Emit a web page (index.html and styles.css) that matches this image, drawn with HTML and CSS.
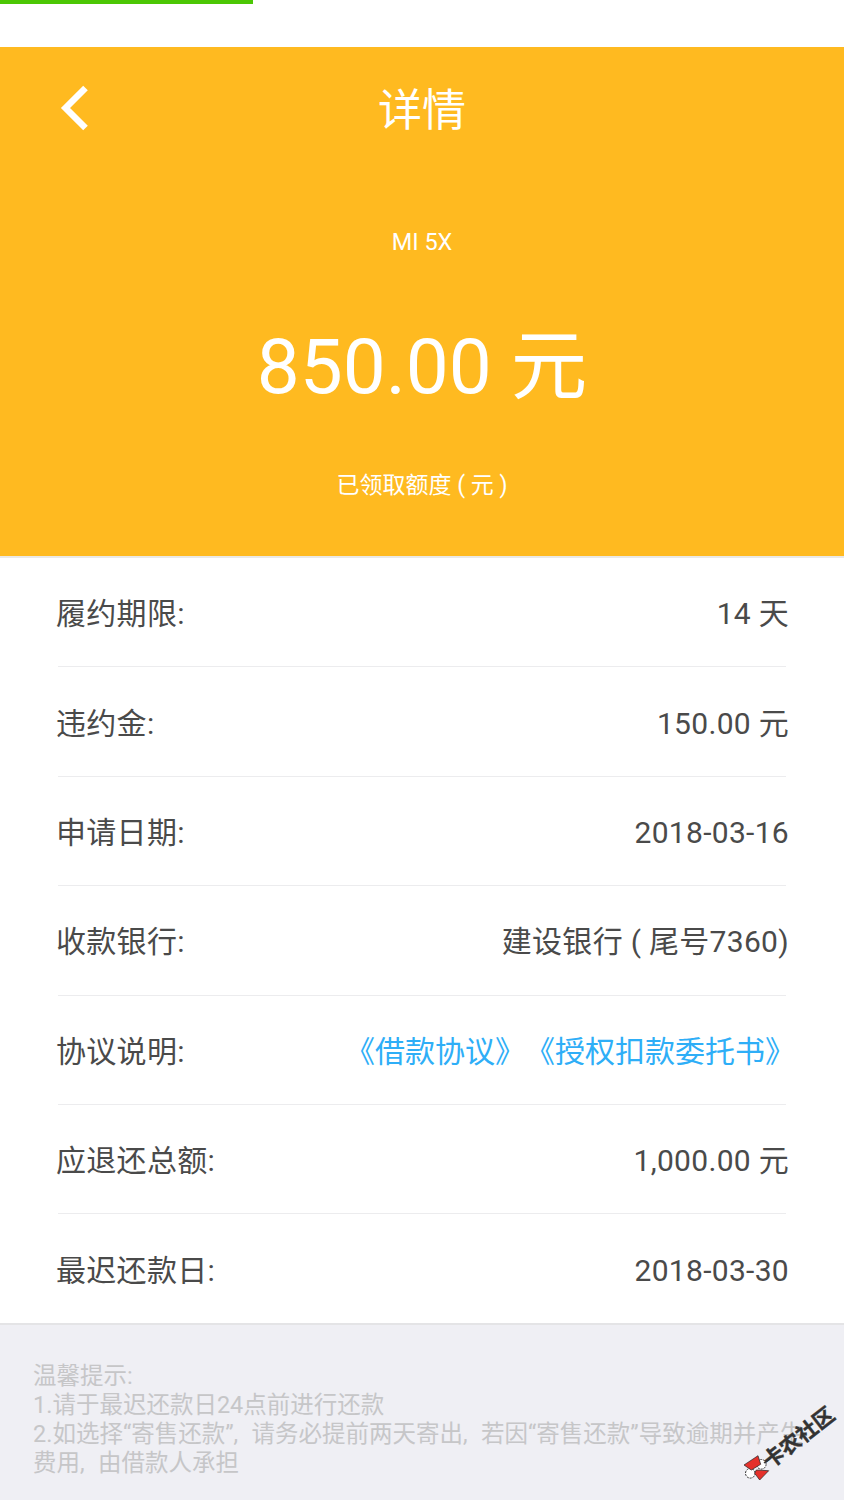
FILE: index.html
```html
<!DOCTYPE html>
<html lang="zh-CN">
<head>
    <meta charset="UTF-8">
    <meta name="viewport" content="width=device-width, initial-scale=1.0">
    <title>详情</title>
    <link rel="stylesheet" href="styles.css">
</head>
<body>
    <div class="progress"><div class="progress-bar"></div></div>

    <header class="hero">
        <div class="nav">
            <svg class="back" width="32" height="50" viewBox="0 0 32 50">
                <path d="M27.5 4 L7.5 24 L27.5 44" fill="none" stroke="#fff" stroke-width="6.5"/>
            </svg>
            <h1 class="title">详情</h1>
        </div>
        <p class="device">MI 5X</p>
        <p class="amount">850.00 元</p>
        <p class="amount-label">已领取额度 ( 元 )</p>
    </header>

    <section class="details">
        <div class="row"><span>履约期限:</span><span>14 天</span></div>
        <div class="row"><span>违约金:</span><span>150.00 元</span></div>
        <div class="row"><span>申请日期:</span><span>2018-03-16</span></div>
        <div class="row"><span>收款银行:</span><span>建设银行 ( 尾号7360)</span></div>
        <div class="row"><span>协议说明:</span><span class="links"><a>《借款协议》</a><a>《授权扣款委托书》</a></span></div>
        <div class="row"><span>应退还总额:</span><span>1,000.00 元</span></div>
        <div class="row"><span>最迟还款日:</span><span>2018-03-30</span></div>
    </section>

    <footer class="tips">
        <p>温馨提示:</p>
        <p>1.请于最迟还款日24点前进行还款</p>
        <p>2.如选择“寄售还款”, 请务必提前两天寄出, 若因“寄售还款”导致逾期并产生费用, 由借款人承担</p>
    </footer>

    <svg class="wm-logo" width="30" height="28" viewBox="0 0 30 28">
        <circle cx="18.3" cy="9.3" r="4.8" fill="#fff" stroke="#333" stroke-dasharray="2 1"/>
        <circle cx="7.3" cy="18.3" r="4.8" fill="#fff" stroke="#333" stroke-dasharray="2 1"/>
        <path d="M1 10 L15 0.7 L17.7 9.3 L8.3 15 Z M13.3 15 L25.7 15.7 L16.7 25 L11.7 18.3 Z" fill="#e5312b" stroke="#222" stroke-width="0.7"/>
        <path d="M21 8 L27 4" stroke="#333" stroke-width="1.5"/>
    </svg>
    <div class="wm-text">卡农社区</div>
</body>
</html>
```

FILE: styles.css
```css
* {
    box-sizing: border-box;
}
body {
    margin: 0;
    height: 1500px;
    overflow: hidden;
    position: relative;
    background-color: #efeff4;
    font-family: Roboto, "Noto Sans CJK SC", sans-serif;
}
p, h1 {
    margin: 0;
    font-weight: 400;
}
.progress {
    height: 47px;
    background-color: #fff;
}
.progress-bar {
    width: 253px;
    height: 4px;
    background-color: #4cc705;
}
.hero {
    height: 511px;
    background-color: #ffba20;
    border-bottom: 2px solid #ebe9e5;
    color: #fff;
    display: flex;
    flex-direction: column;
    align-items: center;
}
.nav {
    position: relative;
    width: 100%;
    height: 120px;
    display: flex;
    justify-content: center;
    align-items: center;
}
.back {
    position: absolute;
    left: 58px;
    top: 37px;
}
.title {
    font-size: 44px;
}
.device {
    margin-top: 58px;
    font-size: 23.5px;
    line-height: 34px;
}
.amount {
    margin-top: 58px;
    font-size: 76.5px;
    line-height: 100px;
}
.amount-label {
    margin-top: 52px;
    font-size: 23px;
    line-height: 34px;
}
.details {
    background-color: #fff;
    border-bottom: 2px solid #e4e4e6;
    padding: 0 58px;
}
.row {
    height: 109.4px;
    padding-top: 4px;
    border-bottom: 1px solid #ececee;
    display: flex;
    justify-content: space-between;
    align-items: center;
    font-size: 30px;
    line-height: 40px;
    letter-spacing: 0.3px;
    color: #4a4a4a;
}
.row:last-child {
    height: 108.4px;
    border-bottom: none;
}
.row span:first-child {
    margin-left: -2px;
}
.row span:last-child {
    margin-right: -3px;
}
.row span.links {
    display: flex;
    margin-right: -9px;
    letter-spacing: 0;
    color: #2eaef7;
}
.tips {
    padding: 37px 33px 0;
    font-size: 23.5px;
    line-height: 29px;
    word-spacing: 7.5px;
    color: #c6c6c8;
}
.wm-logo {
    position: absolute;
    left: 743px;
    top: 1455px;
}
.wm-text {
    position: absolute;
    left: 757px;
    top: 1424px;
    width: 84px;
    line-height: 28px;
    text-align: center;
    transform: rotate(-38deg);
    font-size: 21px;
    font-weight: 700;
    -webkit-text-stroke: 0.4px #333;
    color: #333;
    white-space: nowrap;
}
```
